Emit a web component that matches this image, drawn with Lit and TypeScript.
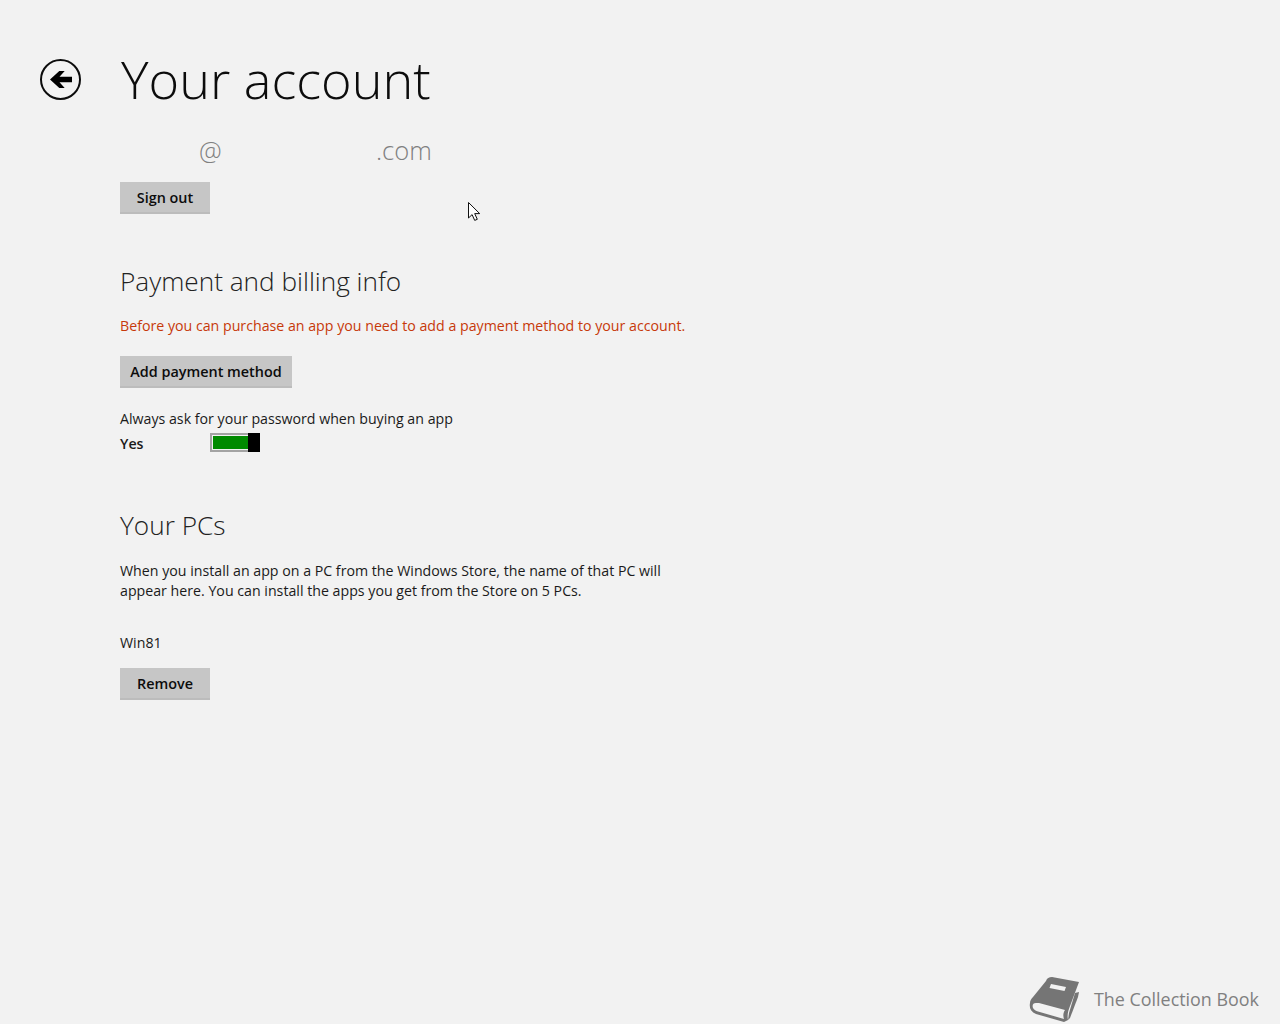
import { LitElement, html, css } from "lit";
import { customElement } from "lit/decorators.js";

@customElement("app-root")
export class AppRoot extends LitElement {
  static styles = css`
    :host { display: block; position: relative; width: 1280px; height: 1024px; overflow: hidden; background: #f2f2f2; color: #1a1a1a; font-family: "Open Sans", "Noto Sans", sans-serif; font-size: 14.2px; }
    .page { display: flex; flex-direction: column; padding: 0 0 0 120px; }
    .header { display: flex; align-items: center; margin-left: -80px; box-sizing: border-box; height: 130px; padding-top: 30px; }
    .back { width: 42px; height: 42px; margin-right: 39px; flex: none; display: block; }
    h1 { margin: -2px 0 0; font-size: 52.2px; font-weight: 300; line-height: 60px; color: #0c0c0c; }
    .email { display: flex; height: 44px; align-items: center; font-size: 25.6px; font-weight: 300; color: #808080; margin-top: -2px; margin-bottom: 10px; }
    .at { margin-left: 79px; width: 177px; }
    button { display: flex; align-items: center; justify-content: center; height: 32px; width: 90px; box-sizing: border-box; padding: 0; border: none; background: #c6c6c6; border-bottom: 2px solid #bcbcbc; color: #0c0c0c; font: 600 14.4px "Open Sans", "Noto Sans", sans-serif; }
    button.wide { width: 172px; }
    h2 { margin: 0; font-size: 26.2px; font-weight: 300; line-height: 34px; color: #222; }
    p { margin: 0; line-height: 20px; }
    .pay { margin-top: 50px; }
    .warn { color: #c7390a; margin-top: 18px; }
    .add { margin-top: 20px; }
    .ask { margin-top: 21px; }
    .toggle-row { display: flex; align-items: center; height: 24px; margin-top: 2px; }
    .yes { width: 90px; font-weight: 600; }
    .toggle { display: flex; width: 50px; height: 19px; box-sizing: border-box; border: 2px solid #a3a3a3; border-right: none; background: #f2f2f2; margin-bottom: 2px; }
    .fill { flex: 1; margin: 1px; background: #008a00; margin-right: 0; }
    .thumb { width: 12px; height: 19px; margin-top: -2px; background: #000; }
    .pcs { margin-top: 53px; }
    .desc { margin-top: 19px; width: 570px; }
    .win { margin-top: 32px; }
    .remove { margin-top: 15px; }
    .cursor { position: absolute; left: 468px; top: 202px; width: 13px; height: 19px; }
    .mark { position: absolute; left: 1028px; top: 975px; display: flex; align-items: center; gap: 14px; color: #808080; font-size: 17.9px; height: 47px; }
    .mark svg { width: 52px; height: 47px; display: block; }
  `;

  render() {
    return html`
      <div class="page">
        <div class="header">
          <svg class="back" viewBox="0 0 42 42">
            <circle cx="20.5" cy="20.5" r="19.5" fill="none" stroke="#0c0c0c" stroke-width="2"/>
            <path d="M32 17.8H19.5l5.2-5.8h-5.4L10 20.5l9.3 8.5h5.4l-5.2-5.8H32z" fill="#000"/>
          </svg>
          <h1>Your account</h1>
        </div>
        <div class="email"><span class="at">@</span><span>.com</span></div>
        <button>Sign out</button>
        <h2 class="pay">Payment and billing info</h2>
        <p class="warn">Before you can purchase an app you need to add a payment method to your account.</p>
        <button class="wide add">Add payment method</button>
        <p class="ask">Always ask for your password when buying an app</p>
        <div class="toggle-row">
          <span class="yes">Yes</span>
          <div class="toggle"><div class="fill"></div><div class="thumb"></div></div>
        </div>
        <h2 class="pcs">Your PCs</h2>
        <p class="desc">When you install an app on a PC from the Windows Store, the name of that PC will appear here. You can install the apps you get from the Store on 5 PCs.</p>
        <p class="win">Win81</p>
        <button class="remove">Remove</button>
      </div>
      <svg class="cursor" viewBox="0 0 13 19">
        <path d="M.5.5v15.5l3.6-3.4 2.6 5.8 2.6-1.1-2.6-5.7h5z" fill="#fff" stroke="#111" stroke-width="1"/>
      </svg>
      <div class="mark">
        <svg viewBox="0 0 52 47">
          <path d="M24 2 51 7 42 31C40 36 39 40 40 45L36 47 8 39C3 37 1 33 2 28 2 26 3 24 5 22L18 6C19 3 21 2 24 2z" fill="#757575"/>
          <path d="M8 28C5 28 4 30 5 33 6 35 8 36 10 36.5L36 44C35 41 35 38 37 35L11 28z" fill="#f2f2f2"/>
          <path d="M47 18 51 17 50 22 42 43 40 45 41 38z" fill="#757575"/>
          <path d="M23 9l15 3-1.5 4-15-3z" fill="#f2f2f2"/>
        </svg>
        <span>The Collection Book</span>
      </div>
    `;
  }
}
